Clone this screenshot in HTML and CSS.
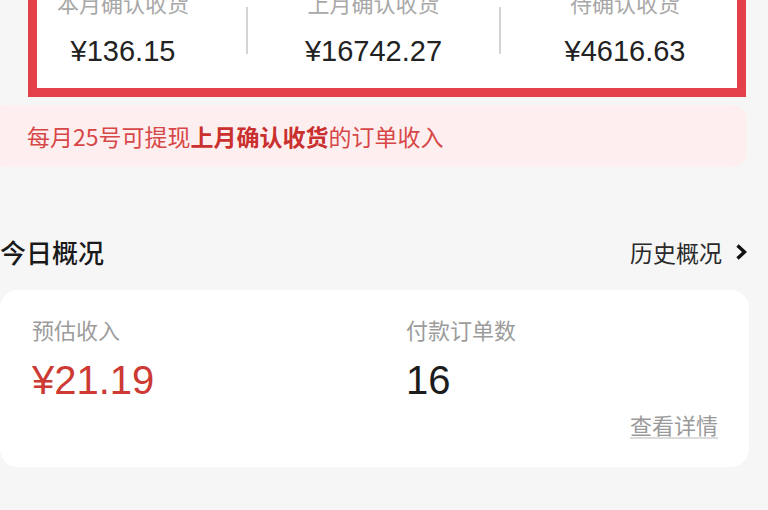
FILE: index.html
```html
<!DOCTYPE html>
<html lang="zh-CN">
<head>
<meta charset="utf-8">
<title>收益</title>
<link rel="stylesheet" href="styles.css">
</head>
<body>
<div class="page">
  <section class="stats">
    <div class="stat stat-1">
      <div class="stat-label">本月确认收货</div>
      <div class="stat-value">¥136.15</div>
    </div>
    <div class="divider"></div>
    <div class="stat stat-2">
      <div class="stat-label">上月确认收货</div>
      <div class="stat-value">¥16742.27</div>
    </div>
    <div class="divider"></div>
    <div class="stat stat-3">
      <div class="stat-label">待确认收货</div>
      <div class="stat-value">¥4616.63</div>
    </div>
  </section>

  <div class="notice">每月25号可提现<b>上月确认收货</b>的订单收入</div>

  <div class="section-head">
    <h2 class="section-title">今日概况</h2>
    <a class="history">历史概况
      <svg class="chev" width="13" height="18" viewBox="0 0 13 18"><path d="M2.5 2.5 L9.5 9 L2.5 15.5" fill="none" stroke="#111" stroke-width="3.4" stroke-linejoin="miter"/></svg>
    </a>
  </div>

  <section class="today">
    <div class="metrics">
      <div class="metric">
        <div class="metric-label">预估收入</div>
        <div class="metric-value red">¥21.19</div>
      </div>
      <div class="metric">
        <div class="metric-label">付款订单数</div>
        <div class="metric-value">16</div>
      </div>
    </div>
    <div class="more-row"><a class="more">查看详情</a></div>
  </section>
</div>
</body>
</html>
```
FILE: styles.css
```css
html, body {
  margin: 0;
  padding: 0;
  background: #f6f6f6;
}
body {
  font-family: "Liberation Sans", "Noto Sans CJK SC", sans-serif;
  color: #222;
  width: 768px;
  height: 510px;
  overflow: hidden;
}
.page {
  display: flex;
  flex-direction: column;
}
.stats {
  margin: -30px 0 0 28px;
  width: 700px;
  border: 9px solid #e3404a;
  background: #fff;
  display: flex;
  align-items: flex-start;
  padding: 12px 0 19px;
}
.stat {
  display: flex;
  flex-direction: column;
  align-items: center;
}
.stat-1 { width: 172px; padding-right: 37px; }
.stat-2 { width: 251px; }
.stat-3 { width: 224px; padding-left: 12px; }
.divider {
  width: 2px;
  height: 47px;
  margin-top: 16px;
  background: #d4d4d4;
}
.stat-label {
  font-size: 22px;
  line-height: 28px;
  color: #a8a8a8;
}
.stat-value {
  margin-top: 14px;
  font-size: 29px;
  line-height: 36px;
  color: #222;
}
.notice {
  margin: 8px 0 0 -12px;
  width: 720px;
  height: 62px;
  padding-left: 39px;
  border-radius: 14px;
  background: #fdeff0;
  color: #d84747;
  font-size: 23px;
  line-height: 62px;
  font-family: "Noto Sans CJK SC", sans-serif;
}
.notice b {
  color: #c9302e;
  font-weight: 700;
}
.section-head {
  margin-top: 68px;
  width: 748px;
  display: flex;
  justify-content: space-between;
  align-items: center;
  height: 34px;
}
.section-title {
  margin: 0;
  font-size: 26px;
  line-height: 34px;
  font-weight: 500;
  color: #1a1a1a;
  font-family: "Noto Sans CJK SC", sans-serif;
}
.history {
  display: flex;
  align-items: center;
  gap: 13px;
  font-size: 23px;
  line-height: 34px;
  color: #2a2a2a;
  font-family: "Noto Sans CJK SC", sans-serif;
}
.chev { display: block; }
.today {
  margin-top: 21px;
  width: 686px;
  background: #fff;
  border-radius: 18px;
  padding: 25px 31px 28px 32px;
}
.metrics {
  display: grid;
  grid-template-columns: 374px 1fr;
}
.metric-label {
  font-size: 22px;
  line-height: 28px;
  color: #9c9c9c;
  font-family: "Noto Sans CJK SC", sans-serif;
}
.metric-value {
  margin-top: 13px;
  font-size: 40px;
  line-height: 48px;
  color: #1c1c1c;
}
.metric-value.red { color: #cc3a33; }
.more-row {
  display: flex;
  justify-content: flex-end;
  margin-top: 7px;
}
.more {
  font-size: 22px;
  line-height: 26px;
  color: #9a9a9a;
  border-bottom: 2px solid #dcdcdc;
  font-family: "Noto Sans CJK SC", sans-serif;
}
```
